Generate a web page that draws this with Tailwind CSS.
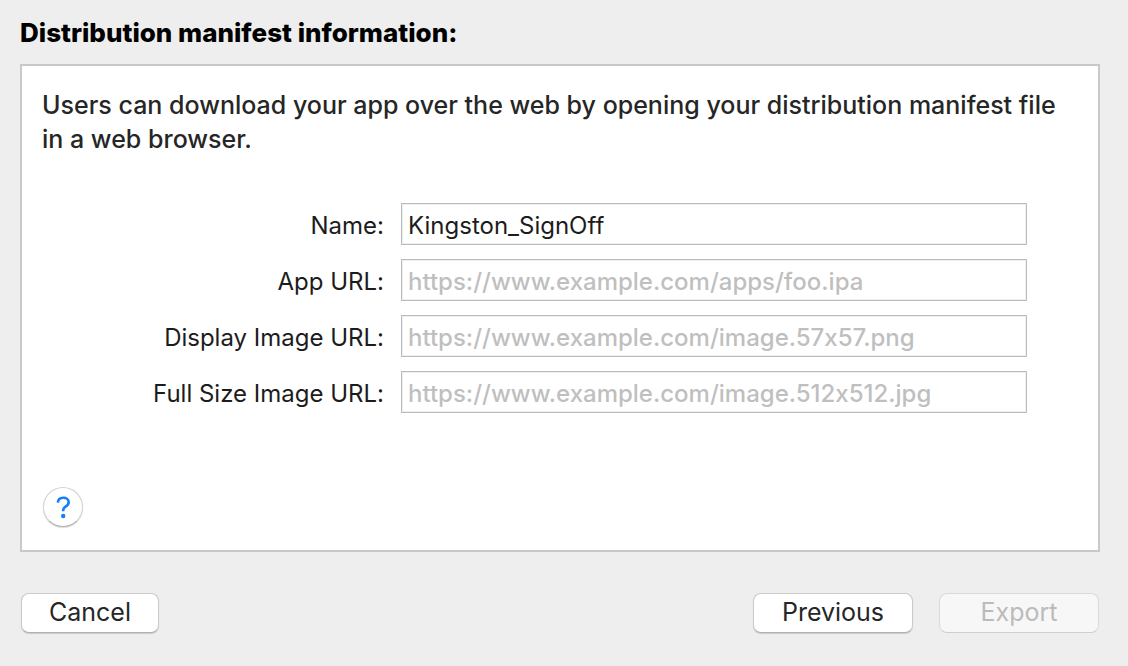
<!DOCTYPE html>
<html lang="en">
<head>
<meta charset="utf-8">
<meta name="viewport" content="width=device-width, initial-scale=1">
<title>Distribution manifest information</title>
<script src="https://cdn.jsdelivr.net/npm/@tailwindcss/browser@4"></script>
</head>
<body class="min-h-screen bg-[#eeeeee] font-['Inter','Noto_Sans',sans-serif] text-[#262626] [font-feature-settings:'calt'_0]">
<main class="flex min-h-screen flex-col pt-[17px] pr-7 pb-[33px] pl-5">
  <h1 class="text-[26px] leading-8 font-extrabold text-black">Distribution manifest information:</h1>
  <form class="flex grow flex-col">
    <section class="mt-[15px] mb-[41px] flex grow flex-col border-2 border-[#c8c8c8] bg-white px-5 pt-[22px] pb-[23px]">
      <p class="text-[25px] leading-[34px] font-[460] pr-3">Users can download your app over the web by opening your distribution manifest file in a web browser.</p>
      <div class="mt-[47px] mr-[51px] grid grid-cols-[342px_1fr] items-center gap-x-[17px] gap-y-3.5 text-[24px] text-[#1c1c1c]">
        <label for="name" class="pt-1 text-right">Name:</label>
        <input id="name" type="text" value="Kingston_SignOff" class="h-[42px] min-w-0 border border-[#bababa] px-1.5 pt-0.5 inset-shadow-[0_0_0_1px_#f0f0f0] outline-none placeholder:font-medium placeholder:text-[#bfbfbf]">
        <label for="app" class="pt-1 text-right">App URL:</label>
        <input id="app" type="text" placeholder="https://www.example.com/apps/foo.ipa" class="h-[42px] min-w-0 border border-[#bababa] px-1.5 pt-0.5 inset-shadow-[0_0_0_1px_#f0f0f0] outline-none placeholder:font-medium placeholder:text-[#bfbfbf]">
        <label for="display" class="pt-1 text-right">Display Image URL:</label>
        <input id="display" type="text" placeholder="https://www.example.com/image.57x57.png" class="h-[42px] min-w-0 border border-[#bababa] px-1.5 pt-0.5 inset-shadow-[0_0_0_1px_#f0f0f0] outline-none placeholder:font-medium placeholder:text-[#bfbfbf]">
        <label for="full" class="pt-1 text-right">Full Size Image URL:</label>
        <input id="full" type="text" placeholder="https://www.example.com/image.512x512.jpg" class="h-[42px] min-w-0 border border-[#bababa] px-1.5 pt-0.5 inset-shadow-[0_0_0_1px_#f0f0f0] outline-none placeholder:font-medium placeholder:text-[#bfbfbf]">
      </div>
      <button type="button" aria-label="Help" class="mt-auto ml-px flex size-10 items-center justify-center rounded-full border border-[#d2d2d2] border-b-[#b4b4b4] bg-white text-[#147efb] shadow-[0_1px_1px_#00000026]">
        <svg class="h-6 w-4" viewBox="0 0 16 24" fill="none" aria-hidden="true"><path d="M2.900 7.600C3 4.200 5 2.700 8.200 2.700s5.500 1.700 5.500 4.500c0 2.200-1.200 3.300-3.100 4.500C8.800 12.800 8.200 13.700 8.200 15.300v1" stroke="currentColor" stroke-width="2.600"/><circle cx="8.200" cy="21" r="2.200" fill="currentColor"/></svg>
      </button>
    </section>
    <footer class="flex gap-[26px] pr-px pl-px text-[25px]">
      <button type="button" class="mr-auto h-10 w-[138px] rounded-lg border border-[#cacaca] border-b-[#b0b0b0] bg-white shadow-[0_1px_1px_#00000026]">Cancel</button>
      <button type="button" class="h-10 w-40 rounded-lg border border-[#cacaca] border-b-[#b0b0b0] bg-white shadow-[0_1px_1px_#00000026]">Previous</button>
      <button type="submit" disabled class="h-10 w-40 rounded-lg border border-[#dadada] border-b-[#cfcfcf] bg-[#f7f7f7] text-[#bbbbbb]">Export</button>
    </footer>
  </form>
</main>
</body>
</html>
